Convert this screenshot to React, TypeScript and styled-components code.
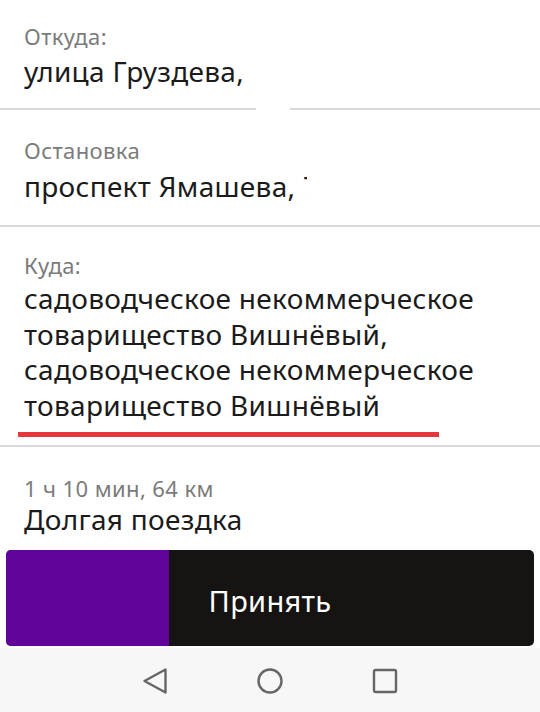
import React from "react"
import styled, { createGlobalStyle } from "styled-components"

const GlobalStyle = createGlobalStyle`
  html, body {
    margin: 0;
    padding: 0;
    background: #ffffff;
  }
  body {
    font-family: "Noto Sans", "Open Sans", sans-serif;
    -webkit-font-smoothing: antialiased;
  }
`

const Screen = styled.div`
  width: 540px;
  height: 712px;
  display: flex;
  flex-direction: column;
  background: #ffffff;
  overflow: hidden;
`

const Section = styled.div<{ $top: number; $bottom: number; $gap?: boolean }>`
  padding: ${(p) => p.$top}px 24px ${(p) => p.$bottom}px 24px;
  border-bottom: 2px solid #dadada;
  ${(p) =>
    p.$gap &&
    `
    border-bottom: none;
    background-image: linear-gradient(
      to right,
      #dadada 0,
      #dadada 256px,
      transparent 256px,
      transparent 290px,
      #dadada 290px
    );
    background-size: 100% 2px;
    background-position: bottom left;
    background-repeat: no-repeat;
    padding-bottom: ${p.$bottom + 2}px;
  `}
`

const Label = styled.div<{ $mb?: number }>`
  font-size: 22px;
  line-height: 26px;
  letter-spacing: 0.4px;
  color: #7b7b7b;
  margin-bottom: ${(p) => p.$mb ?? 4}px;
`

const Value = styled.div<{ $lh?: number }>`
  font-size: 28px;
  line-height: ${(p) => p.$lh ?? 35}px;
  letter-spacing: 0.3px;
  color: #1b1b1b;
  white-space: nowrap;
`

const Clipped = styled.span`
  display: inline-block;
  width: 4px;
  overflow: hidden;
  vertical-align: top;
`

const Underline = styled.div`
  height: 5px;
  width: 421px;
  margin: 9px 0 0 -6px;
  background: #e8363d;
`

const LastSection = styled.div`
  padding: 28px 24px 0 24px;
`

const AcceptButton = styled.button`
  margin: 15px 6px 0 6px;
  height: 96px;
  border: none;
  border-radius: 5px;
  overflow: hidden;
  padding: 0;
  display: grid;
  background: #151412;
  cursor: pointer;
`

const ButtonLayer = styled.div`
  grid-area: 1 / 1;
  display: flex;
  align-items: stretch;
`

const Progress = styled.div`
  background: #62039a;
`

const ButtonText = styled.span`
  grid-area: 1 / 1;
  align-self: center;
  justify-self: center;
  color: #ffffff;
  font-family: "Noto Sans", sans-serif;
  font-size: 29px;
  letter-spacing: 0.3px;
  position: relative;
  top: 2px;
`

const NavBar = styled.div`
  margin-top: 2px;
  flex: 1;
  background: #f7f7f7;
  display: flex;
  justify-content: center;
  align-items: center;
  gap: 89px;
  padding-top: 2px;
`

const NavIcon = styled.svg`
  width: 26px;
  height: 26px;
  fill: none;
  stroke: #666666;
  stroke-width: 2.4;
  stroke-linejoin: round;
`

const App = () => {
  const progress = 163

  return (
    <>
      <GlobalStyle />
      <Screen>
        <Section $top={23} $bottom={19} $gap>
          <Label $mb={5}>Откуда:</Label>
          <Value>улица Груздева,</Value>
        </Section>
        <Section $top={27} $bottom={21}>
          <Label $mb={6}>Остановка</Label>
          <Value>
            проспект Ямашева, <Clipped>7</Clipped>
          </Value>
        </Section>
        <Section $top={25} $bottom={8}>
          <Label $mb={3}>Куда:</Label>
          <Value $lh={35.5}>
            садоводческое некоммерческое
            <br />
            товарищество Вишнёвый,
            <br />
            садоводческое некоммерческое
            <br />
            товарищество Вишнёвый
          </Value>
          <Underline />
        </Section>
        <LastSection>
          <Label $mb={2}>1 ч 10 мин, 64 км</Label>
          <Value $lh={32}>Долгая поездка</Value>
        </LastSection>
        <AcceptButton>
          <ButtonLayer>
            <Progress style={{ width: progress }} />
          </ButtonLayer>
          <ButtonText>Принять</ButtonText>
        </AcceptButton>
        <NavBar>
          <NavIcon viewBox="0 0 26 26">
            <path d="M2.5 13 L23.5 1.5 L23.5 24.5 Z" />
          </NavIcon>
          <NavIcon viewBox="0 0 26 26">
            <circle cx="13" cy="13" r="11.5" />
          </NavIcon>
          <NavIcon viewBox="0 0 26 26">
            <rect x="2" y="2" width="22" height="22" rx="1.5" />
          </NavIcon>
        </NavBar>
      </Screen>
    </>
  )
}

export default App
